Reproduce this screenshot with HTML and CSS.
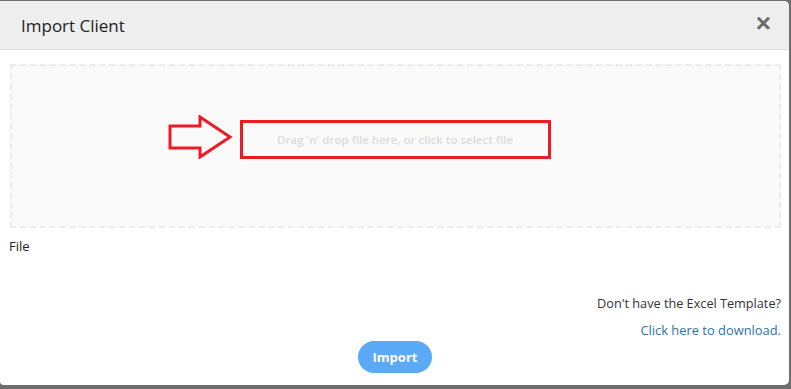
FILE: index.html
```html
<!DOCTYPE html>
<html lang="en">
<head>
    <meta charset="UTF-8">
    <title>Import Client</title>
    <link rel="stylesheet" href="styles.css">
</head>
<body>
    <div class="modal">
        <div class="modal-header">
            <h4 class="modal-title">Import Client</h4>
            <button class="close">&times;</button>
        </div>
        <div class="modal-body">
            <div class="dropzone">
                <svg class="arrow" width="66" height="44" viewBox="0 0 66 44">
                    <polygon points="2,11 32,11 32,2 62,22 32,42 32,33 2,33" fill="none" stroke="#ed1c24" stroke-width="3"/>
                </svg>
                <span class="dz-text">Drag 'n' drop file here, or click to select file</span>
            </div>
            <div class="file-label">File</div>
            <div class="template">
                <p>Don't have the Excel Template?</p>
                <a href="#">Click here to download.</a>
            </div>
            <div class="actions">
                <button class="btn-import">Import</button>
            </div>
        </div>
    </div>
</body>
</html>
```

FILE: styles.css
```css
body {
    margin: 0;
    background: #6e6e6e;
    font-family: "Open Sans", "Noto Sans", sans-serif;
    height: 389px;
    overflow: hidden;
}
.modal {
    margin-top: 1px;
    width: 789px;
    height: 384px;
    background: #fff;
    border-radius: 0 5px 5px 4px;
    overflow: hidden;
}
.modal-header {
    height: 48px;
    background: #eeeeee;
    border-bottom: 1px solid #dde1e8;
    display: flex;
    align-items: center;
    justify-content: space-between;
    padding: 0 18px 0 21px;
}
.modal-title {
    margin: 0;
    font-size: 17px;
    font-weight: 400;
    color: #222;
    padding-top: 1px;
}
.close {
    border: none;
    background: none;
    font-size: 26px;
    font-weight: 700;
    color: #6a6a6a;
    padding: 0;
    line-height: 1;
    margin-top: -4px;
    font-family: "Liberation Sans", sans-serif;
}
.modal-body {
    padding: 14px 8px 0 9px;
}
.dropzone {
    position: relative;
    margin-left: 1px;
    height: 160px;
    border: 2px dashed #ececec;
    background: #fafafa;
    display: flex;
    justify-content: center;
    align-items: center;
}
.dz-text {
    width: 305px;
    height: 33px;
    border: 3px solid #ed1c24;
    display: flex;
    justify-content: center;
    align-items: center;
    font-size: 11.5px;
    font-weight: 600;
    color: #dcdcdc;
    margin: -13px 0 0 -1px;
}
.arrow {
    position: absolute;
    left: 156px;
    top: 49px;
}
.file-label {
    margin-top: 9px;
    font-size: 13px;
    color: #222;
}
.template {
    text-align: right;
    margin-top: 39px;
    font-size: 12.7px;
}
.template p {
    margin: 0;
    color: #333;
}
.template a {
    display: inline-block;
    margin-top: 9px;
    color: #2f72a8;
    text-decoration: none;
    font-size: 12.9px;
}
.actions {
    display: flex;
    justify-content: center;
    margin-top: 2px;
}
.btn-import {
    width: 74px;
    height: 32px;
    border: none;
    border-radius: 16px;
    background: #5aaaf8;
    color: #fff;
    font-family: "Open Sans", sans-serif;
    font-weight: 700;
    font-size: 13px;
}
```
